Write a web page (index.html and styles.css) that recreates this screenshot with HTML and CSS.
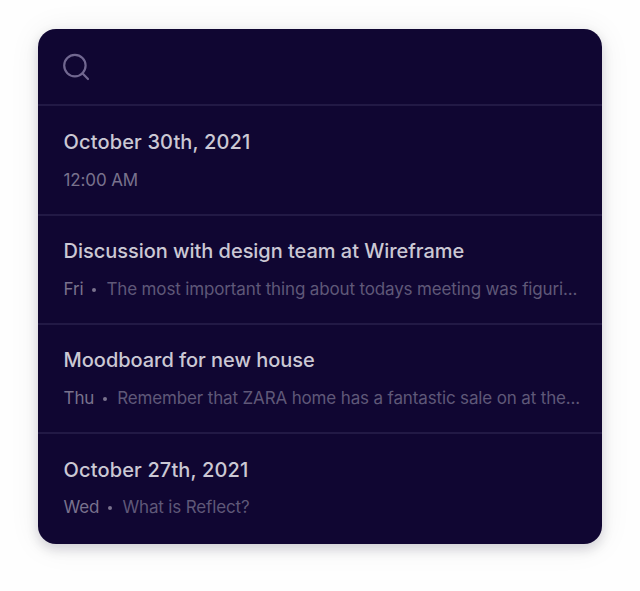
FILE: index.html
```html
<!DOCTYPE html>
<html lang="en">
<head>
<meta charset="utf-8">
<title>Notes</title>
<link rel="stylesheet" href="styles.css">
</head>
<body>
<main class="card">
  <header class="search">
    <svg class="search-icon" viewBox="0 0 28 28" fill="none" stroke="currentColor" stroke-width="2.2" stroke-linecap="round"><circle cx="12.9" cy="12.6" r="10.7"/><path d="M20.4 20.3 26 26"/></svg>
  </header>
  <article class="note">
    <h2 class="date">October 30th, 2021</h2>
    <p><span class="meta">12:00 AM</span></p>
  </article>
  <article class="note">
    <h2>Discussion with design team at Wireframe</h2>
    <p><span class="meta">Fri</span><i class="dot"></i><span class="text">The most important thing about todays meeting was figuri...</span></p>
  </article>
  <article class="note">
    <h2>Moodboard for new house</h2>
    <p><span class="meta">Thu</span><i class="dot"></i><span class="text">Remember that ZARA home has a fantastic sale on at the...</span></p>
  </article>
  <article class="note">
    <h2 class="date">October 27th, 2021</h2>
    <p><span class="meta">Wed</span><i class="dot"></i><span class="text">What is Reflect?</span></p>
  </article>
</main>
</body>
</html>
```
FILE: styles.css
```css
* { box-sizing: border-box; }
body { margin: 0; height: 100vh; padding: 28.5px 0 0 38px; background: #fefefe; font-family: Inter, sans-serif; overflow: hidden; }
.card { width: 564px; height: 515px; border-radius: 18px; background: #100632; overflow: hidden; box-shadow: 0 5px 12px rgba(16,12,40,.16), 0 2px 32px rgba(16,12,40,.07); }
.search { height: 75.9px; padding: 24px; }
.search-icon { display: block; width: 28px; height: 28px; color: #716790; }
.note { height: 109.3px; padding: 23.4px 0 0 25.6px; border-top: 2px solid #221945; white-space: nowrap; }
h2 { margin: 0; height: 24px; font-size: 20px; line-height: 24px; font-weight: 500; letter-spacing: -.04px; color: #cbc8d4; }
.date { letter-spacing: .13px; }
p { display: flex; align-items: center; height: 22px; margin: 14.8px 0 0; font-size: 17px; line-height: 22px; letter-spacing: -.145px; }
.meta { color: #79728d; }
.text { color: #5f5878; }
.dot { width: 4px; height: 4px; margin: 2px 10px 0 9px; border-radius: 50%; background: #79728d; }
```
